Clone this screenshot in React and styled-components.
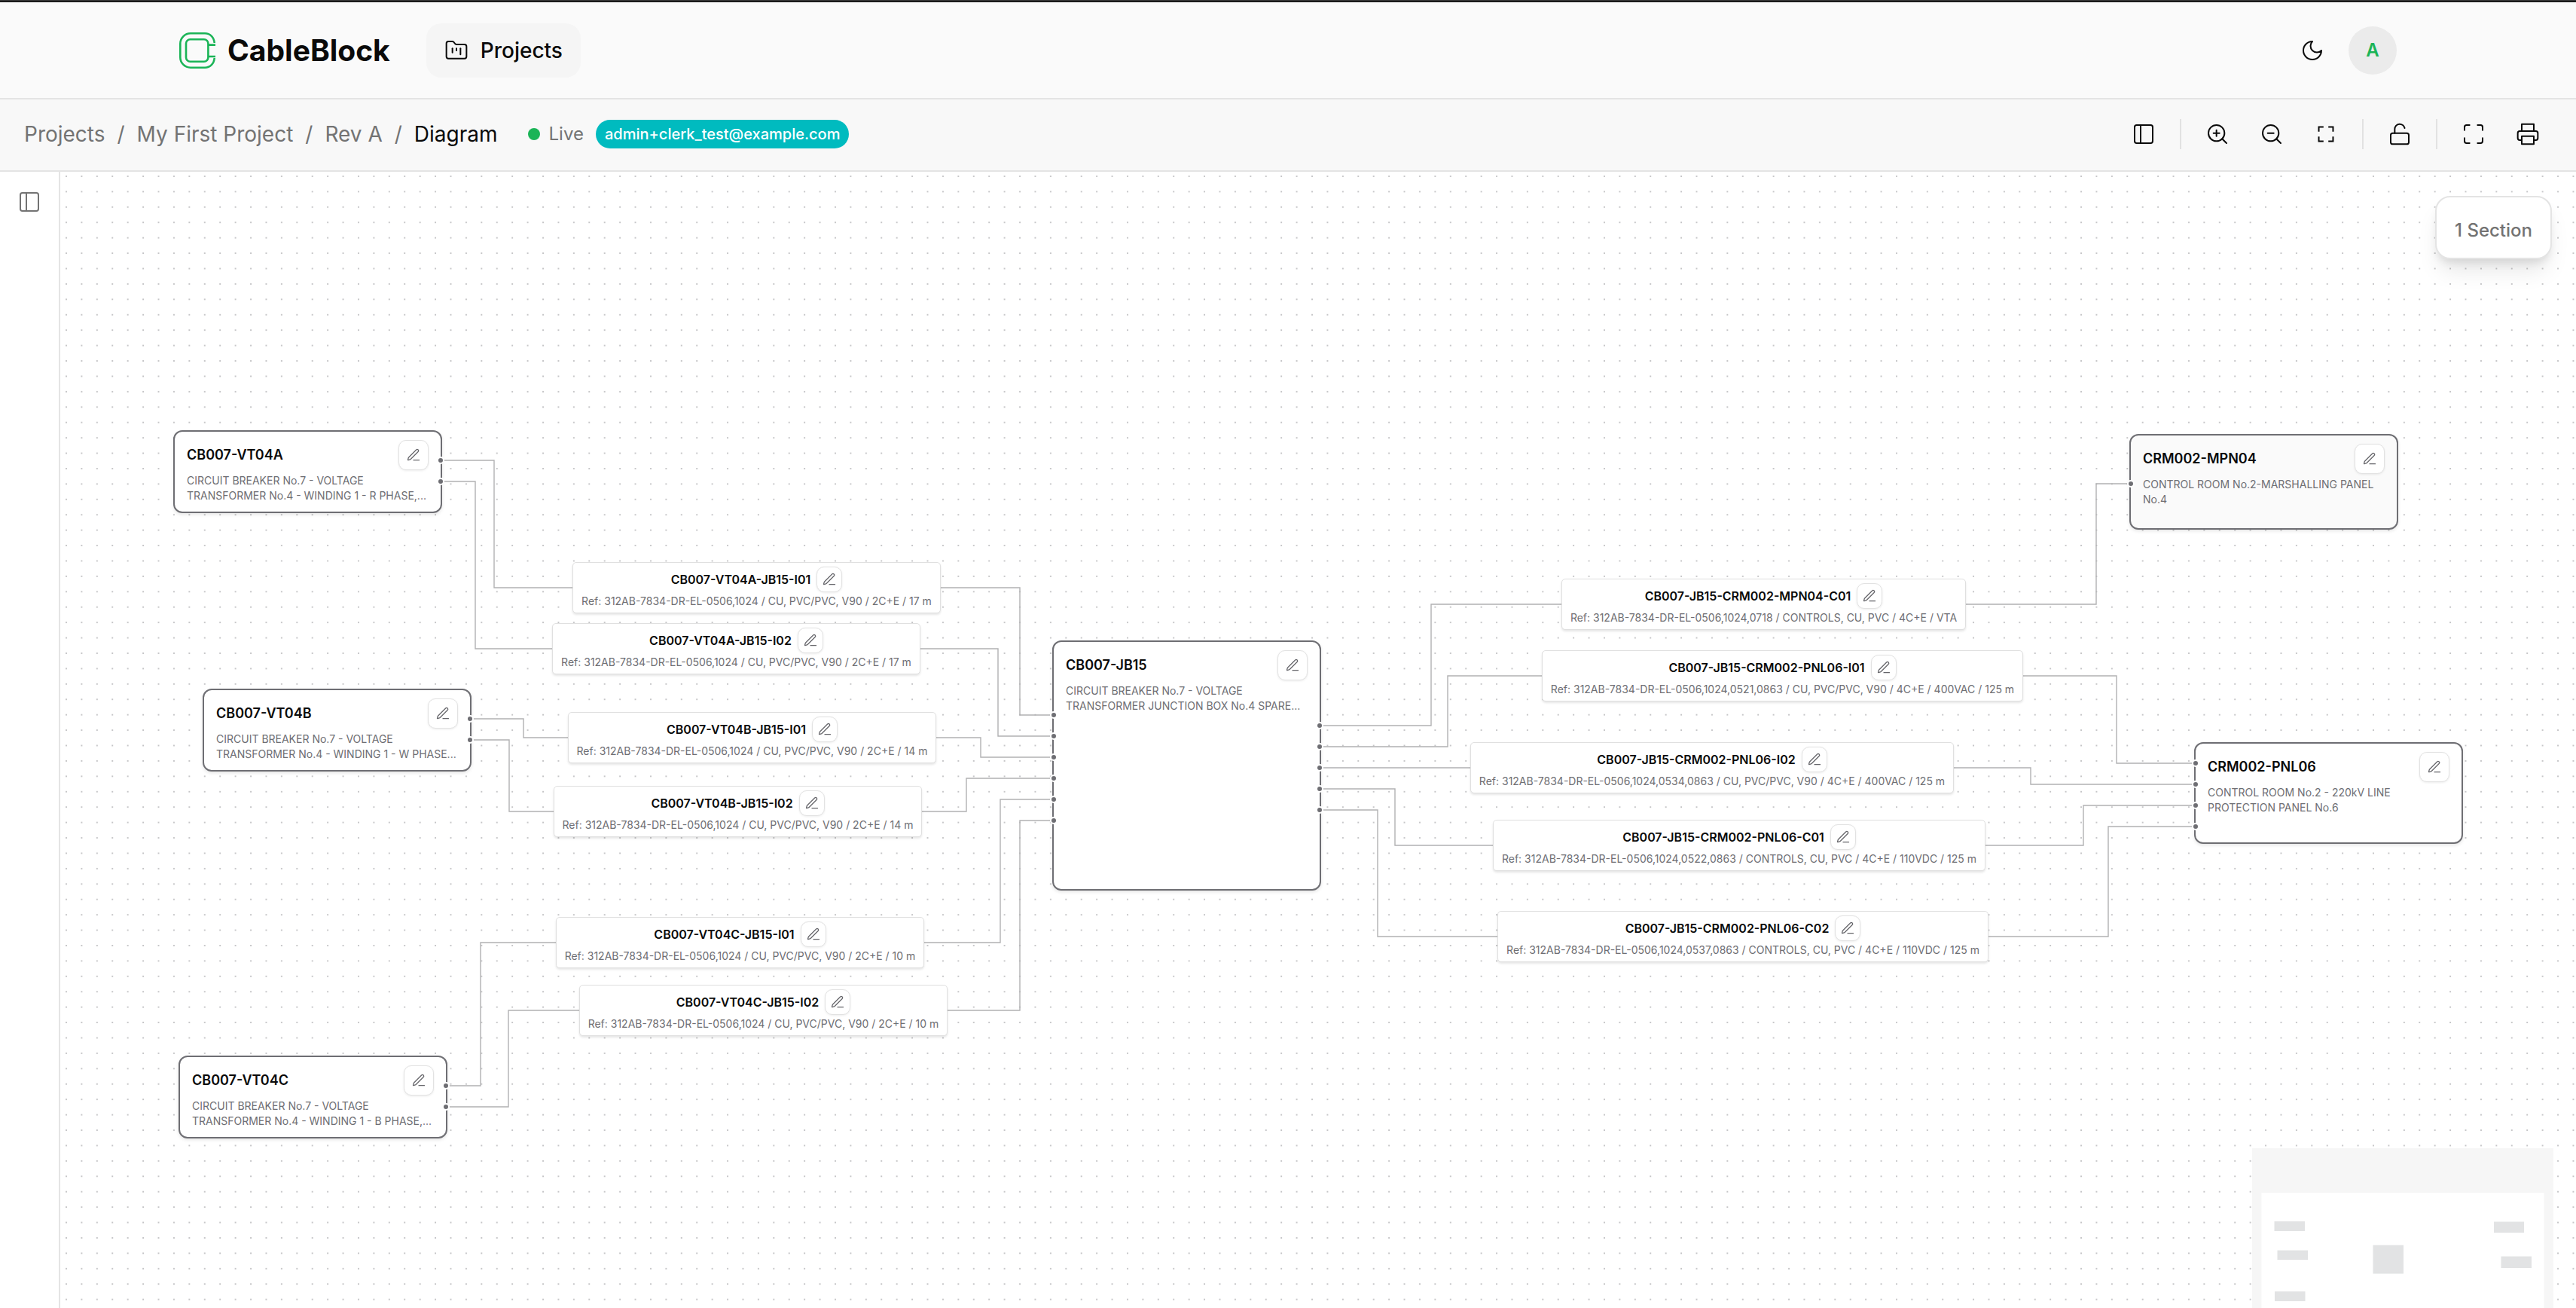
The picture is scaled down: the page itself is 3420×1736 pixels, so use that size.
import React from 'react';
import styled, { createGlobalStyle } from 'styled-components';
import { FolderKanban, LockOpen, Maximize, PanelLeft, ZoomIn, ZoomOut } from 'lucide-react';

const nodes = [
    { id: 'CB007-VT04A', x: 150, y: 343, h: 110, text: 'CIRCUIT BREAKER No.7 - VOLTAGE\nTRANSFORMER No.4 - WINDING 1 - R PHASE,...', right: [40, 68] },
    { id: 'CB007-VT04B', x: 189, y: 686, h: 110, text: 'CIRCUIT BREAKER No.7 - VOLTAGE\nTRANSFORMER No.4 - WINDING 1 - W PHASE...', right: [40, 68] },
    { id: 'CB007-VT04C', x: 157, y: 1173, h: 110, text: 'CIRCUIT BREAKER No.7 - VOLTAGE\nTRANSFORMER No.4 - WINDING 1 - B PHASE,...', right: [40, 68] },
    { id: 'CB007-JB15', x: 1317, y: 622, h: 332, text: 'CIRCUIT BREAKER No.7 - VOLTAGE\nTRANSFORMER JUNCTION BOX No.4 SPARE...', left: [99, 127, 155, 183, 211, 239], right: [113, 141, 169, 197, 225] },
    { id: 'CRM002-MPN04', x: 2747, y: 348, h: 127, text: 'CONTROL ROOM No.2-MARSHALLING PANEL\nNo.4', left: [66], shaded: true },
    { id: 'CRM002-PNL06', x: 2833, y: 757, h: 135, text: 'CONTROL ROOM No.2 - 220kV LINE\nPROTECTION PANEL No.6', left: [28, 56, 84, 112] },
];

const cables = [
    { id: 'CB007-VT04A-JB15-I01', x: 680, y: 518, w: 489, text: 'Ref: 312AB-7834-DR-EL-0506,1024 / CU, PVC/PVC, V90 / 2C+E / 17 m', path: 'M505 383H576V552H1274V721H1319' },
    { id: 'CB007-VT04A-JB15-I02', x: 653, y: 599, w: 489, text: 'Ref: 312AB-7834-DR-EL-0506,1024 / CU, PVC/PVC, V90 / 2C+E / 17 m', path: 'M505 411H551V633H1245V749H1319' },
    { id: 'CB007-VT04B-JB15-I01', x: 674, y: 717, w: 489, text: 'Ref: 312AB-7834-DR-EL-0506,1024 / CU, PVC/PVC, V90 / 2C+E / 14 m', path: 'M544 726H615V751H1222V777H1319' },
    { id: 'CB007-VT04B-JB15-I02', x: 655, y: 815, w: 489, text: 'Ref: 312AB-7834-DR-EL-0506,1024 / CU, PVC/PVC, V90 / 2C+E / 14 m', path: 'M544 754H596V849H1203V805H1319' },
    { id: 'CB007-VT04C-JB15-I01', x: 658, y: 989, w: 489, text: 'Ref: 312AB-7834-DR-EL-0506,1024 / CU, PVC/PVC, V90 / 2C+E / 10 m', path: 'M512 1213H558V1023H1248V833H1319' },
    { id: 'CB007-VT04C-JB15-I02', x: 689, y: 1079, w: 489, text: 'Ref: 312AB-7834-DR-EL-0506,1024 / CU, PVC/PVC, V90 / 2C+E / 10 m', path: 'M512 1241H595V1113H1274V861H1319' },
    { id: 'CB007-JB15-CRM002-MPN04-C01', x: 1993, y: 540, w: 537, text: 'Ref: 312AB-7834-DR-EL-0506,1024,0718 / CONTROLS, CU, PVC / 4C+E / VTA', path: 'M1672 735H1820V574H2703V414H2749' },
    { id: 'CB007-JB15-CRM002-PNL06-I01', x: 1967, y: 635, w: 639, text: 'Ref: 312AB-7834-DR-EL-0506,1024,0521,0863 / CU, PVC/PVC, V90 / 4C+E / 400VAC / 125 m', path: 'M1672 763H1842V669H2730V785H2835' },
    { id: 'CB007-JB15-CRM002-PNL06-I02', x: 1872, y: 757, w: 642, text: 'Ref: 312AB-7834-DR-EL-0506,1024,0534,0863 / CU, PVC/PVC, V90 / 4C+E / 400VAC / 125 m', path: 'M1672 791H2616V813H2835' },
    { id: 'CB007-JB15-CRM002-PNL06-C01', x: 1902, y: 860, w: 654, text: 'Ref: 312AB-7834-DR-EL-0506,1024,0522,0863 / CONTROLS, CU, PVC / 4C+E / 110VDC / 125 m', path: 'M1672 819H1772V894H2686V841H2835' },
    { id: 'CB007-JB15-CRM002-PNL06-C02', x: 1908, y: 981, w: 652, text: 'Ref: 312AB-7834-DR-EL-0506,1024,0537,0863 / CONTROLS, CU, PVC / 4C+E / 110VDC / 125 m', path: 'M1672 847H1749V1015H2719V869H2835' },
];

const PenIcon = ({ size }) => (
    <svg width={size} height={size} viewBox="0 0 24 24" fill="none" stroke="currentColor" strokeWidth="1.5" strokeLinecap="round" strokeLinejoin="round">
        <path d="M12 20h9" />
        <path d="M16.376 3.622a1 1 0 0 1 3.002 3.002L7.368 18.635a2 2 0 0 1-.855.506l-2.872.838a.5.5 0 0 1-.62-.62l.838-2.872a2 2 0 0 1 .506-.854z" />
    </svg>
);

const LineIcon = ({ children }) => (
    <svg width="32" height="32" viewBox="0 0 24 24" fill="none" stroke="currentColor" strokeWidth="1.5" strokeLinecap="round" strokeLinejoin="round">
        {children}
    </svg>
);

const Logo = () => (
    <svg width="48" height="48" viewBox="0 0 48 48" fill="none" stroke="#1bb457" strokeWidth="2.6">
        <path d="M46.7 14C46.2 6.5 41 1.3 34 1.3H15C7.4 1.3 1.3 7.4 1.3 15V33C1.3 40.6 7.4 46.7 15 46.7H34C41 46.7 46.2 41.5 46.7 34" />
        <rect x="9" y="9.2" width="29.4" height="29.6" rx="5.5" />
        <path d="M38.4 16.6H48M38.4 32H48" />
    </svg>
);

const Node = ({ node }) => (
    <NodeCard $x={node.x} $y={node.y} $h={node.h} $shaded={node.shaded}>
        <NodeHead>
            <NodeTitle>{node.id}</NodeTitle>
            <EditButton $size={40} aria-label={`Edit ${node.id}`}><PenIcon size={20} /></EditButton>
        </NodeHead>
        <NodeText>{node.text}</NodeText>
        {(node.left || []).map((y) => <Handle key={`l${y}`} $side="left" $y={y} />)}
        {(node.right || []).map((y) => <Handle key={`r${y}`} $side="right" $y={y} />)}
    </NodeCard>
);

const Cable = ({ cable }) => (
    <CableCard $x={cable.x} $y={cable.y} $w={cable.w}>
        <CableHead>
            <CableTitle>{cable.id}</CableTitle>
            <EditButton $size={34} aria-label={`Edit ${cable.id}`}><PenIcon size={20} /></EditButton>
        </CableHead>
        <CableText>{cable.text}</CableText>
    </CableCard>
);

const App = () => {
    return (
        <Page>
            <GlobalStyle />
            <Strip />
            <Header>
                <HeaderInner>
                    <Brand href="#">
                        <Logo />
                        CableBlock
                    </Brand>
                    <NavLink href="#projects">
                        <FolderKanban size={32} strokeWidth={1.5} />
                        Projects
                    </NavLink>
                    <Spacer />
                    <IconButton aria-label="Dark mode">
                        <LineIcon><path d="M12 3a6 6 0 0 0 9 9 9 9 0 1 1-9-9Z" /></LineIcon>
                    </IconButton>
                    <Avatar aria-label="Account">A</Avatar>
                </HeaderInner>
            </Header>
            <Toolbar>
                <Crumbs>
                    <a href="#projects">Projects</a>
                    <span>/</span>
                    <a href="#project">My First Project</a>
                    <span>/</span>
                    <a href="#rev">Rev A</a>
                    <span>/</span>
                    <Current>Diagram</Current>
                </Crumbs>
                <Live><Dot />Live</Live>
                <UserBadge>admin+clerk_test@example.com</UserBadge>
                <Spacer />
                <Tools>
                    <IconButton aria-label="Toggle panel"><PanelLeft size={32} strokeWidth={1.5} /></IconButton>
                    <Divider />
                    <IconButton aria-label="Zoom in"><ZoomIn size={32} strokeWidth={1.5} /></IconButton>
                    <IconButton aria-label="Zoom out"><ZoomOut size={32} strokeWidth={1.5} /></IconButton>
                    <IconButton aria-label="Fit view">
                        <svg width="32" height="32" viewBox="0 0 24 24" fill="none" stroke="currentColor" strokeWidth="1.5">
                            <path d="M4.9 9.6V4.9h4.7M14.4 4.9h4.7v4.7M19.1 14.4v4.7h-4.7M9.6 19.1H4.9v-4.7" />
                        </svg>
                    </IconButton>
                    <Divider />
                    <IconButton aria-label="Unlock"><LockOpen size={32} strokeWidth={1.5} /></IconButton>
                    <Divider />
                    <IconButton aria-label="Full screen"><Maximize size={32} strokeWidth={1.5} /></IconButton>
                    <IconButton aria-label="Print">
                        <LineIcon>
                            <path d="M6 9V2h12v7" />
                            <path d="M6 18H4a2 2 0 0 1-2-2v-5a2 2 0 0 1 2-2h16a2 2 0 0 1 2 2v5a2 2 0 0 1-2 2h-2" />
                            <path d="M6 14h12v8H6z" />
                        </LineIcon>
                    </IconButton>
                </Tools>
            </Toolbar>
            <Workspace>
                <Sidebar>
                    <IconButton $muted aria-label="Open sidebar"><PanelLeft size={32} strokeWidth={1.5} /></IconButton>
                </Sidebar>
                <Canvas>
                    <Wires>
                        <defs>
                            <pattern id="dots" x="7" y="5" width="20.42" height="20.42" patternUnits="userSpaceOnUse">
                                <circle cx="1" cy="1" r="0.8" fill="#7c7c82" />
                            </pattern>
                        </defs>
                        <rect width="100%" height="100%" fill="url(#dots)" />
                        {cables.map((cable) => (
                            <path key={cable.id} d={cable.path} fill="none" stroke="#b1b1b3" strokeWidth="1.4" />
                        ))}
                    </Wires>
                    {nodes.map((node) => <Node key={node.id} node={node} />)}
                    {cables.map((cable) => <Cable key={cable.id} cable={cable} />)}
                    <SectionCount>1 Section</SectionCount>
                    <MiniMap width="400" height="212" viewBox="0 0 400 212">
                        <rect width="400" height="212" fill="#f6f6f6" />
                        <rect x="12.5" y="59" width="375" height="160" fill="#fff" />
                        <g fill="#e2e3e4">
                            <rect x="29.5" y="97" width="40.5" height="13" />
                            <rect x="33.5" y="135.5" width="40.5" height="12.5" />
                            <rect x="30" y="190" width="40.5" height="13" />
                            <rect x="160.5" y="128.5" width="40.5" height="38" />
                            <rect x="321" y="97.5" width="40" height="14.5" />
                            <rect x="330.5" y="143.5" width="40.5" height="15.5" />
                        </g>
                    </MiniMap>
                </Canvas>
            </Workspace>
        </Page>
    )
}

const GlobalStyle = createGlobalStyle`
* {
    box-sizing:border-box;
}
body {
    margin:0;
    font-family:Inter, sans-serif;
    color:#0a0a0a;
    background:#fff;
}
button {
    font-family:inherit;
    padding:0;
}
a {
    color:inherit;
    text-decoration:none;
}
`;

const Page = styled.div`
display:flex;
flex-direction:column;
height:100vh;
`;

const Strip = styled.div`
height:3px;
flex:none;
background:#343434;
border-bottom:1px solid #000;
`;

const Header = styled.header`
height:129px;
flex:none;
background:#fafafa;
border-bottom:2px solid #e4e4e4;
`;

const HeaderInner = styled.div`
height:100%;
max-width:3072px;
margin:0 auto;
padding:0 64px;
display:flex;
align-items:center;
`;

const Brand = styled.a`
display:flex;
align-items:center;
gap:16px;
margin-right:48px;
font-size:39px;
font-weight:700;
line-height:48px;
`;

const NavLink = styled.a`
display:flex;
align-items:center;
gap:16px;
height:72px;
padding:0 24px;
border-radius:20px;
background:#f5f5f5;
font-size:28px;
font-weight:500;
`;

const Spacer = styled.div`
flex:1;
`;

const IconButton = styled.button`
width:64px;
height:64px;
display:flex;
align-items:center;
justify-content:center;
border:none;
background:none;
color:${(props) => (props.$muted ? '#737373' : '#0a0a0a')};
`;

const Avatar = styled.button`
width:64px;
height:64px;
margin-left:16px;
border:none;
border-radius:50%;
background:#ebebeb;
color:#1bb457;
font-size:24px;
font-weight:600;
`;

const Toolbar = styled.div`
height:96px;
flex:none;
display:flex;
align-items:center;
padding:0 32px 2px;
background:#f8f8f8;
border-bottom:2px solid #e4e4e4;
`;

const Crumbs = styled.nav`
display:flex;
gap:16px;
color:#737373;
font-size:28px;
line-height:40px;
`;

const Current = styled.span`
color:#0a0a0a;
`;

const Live = styled.div`
display:flex;
align-items:center;
gap:12px;
margin:0 16px 0 40px;
color:#737373;
font-size:24px;
line-height:32px;
`;

const Dot = styled.span`
width:16px;
height:16px;
border-radius:50%;
background:#1bb457;
`;

const UserBadge = styled.span`
padding:0 12px;
border-radius:20px;
background:#00bbbf;
color:#fff;
font-size:20px;
font-weight:500;
line-height:38px;
`;

const Tools = styled.div`
display:flex;
align-items:center;
gap:8px;
`;

const Divider = styled.div`
width:2px;
height:40px;
margin:0 8px;
background:#e2e2e2;
`;

const Workspace = styled.main`
flex:1;
min-height:0;
display:flex;
`;

const Sidebar = styled.aside`
width:80px;
flex:none;
display:flex;
justify-content:center;
align-items:flex-start;
padding-top:8px;
border-right:2px solid #e4e4e4;
`;

const Canvas = styled.div`
position:relative;
flex:1;
overflow:hidden;
background:#fff;
`;

const Wires = styled.svg`
position:absolute;
top:0;
left:0;
width:100%;
height:100%;
`;

const NodeCard = styled.div`
position:absolute;
left:${(props) => props.$x}px;
top:${(props) => props.$y}px;
width:357px;
height:${(props) => props.$h}px;
padding:11px 16px;
border:2px solid #6e6e73;
border-radius:12px;
background:${(props) => (props.$shaded ? '#fafafa' : '#fff')};
box-shadow:0 2px 4px rgba(0,0,0,0.1);
`;

const NodeHead = styled.div`
display:flex;
align-items:center;
justify-content:space-between;
`;

const NodeTitle = styled.div`
font-size:18px;
font-weight:600;
line-height:24px;
`;

const NodeText = styled.div`
margin-top:4px;
color:#6e6e73;
font-size:14px;
line-height:20px;
white-space:pre;
`;

const EditButton = styled.button`
width:${(props) => props.$size}px;
height:${(props) => props.$size}px;
flex:none;
display:flex;
align-items:center;
justify-content:center;
border:1px solid #e2e2e2;
border-radius:10px;
background:#fff;
color:#65656a;
box-shadow:0 1px 3px rgba(0,0,0,0.08);
`;

// the connection point: a grey dot that cuts a white gap in the card border
const Handle = styled.span`
position:absolute;
top:${(props) => props.$y - 7}px;
${(props) => props.$side}:-5px;
width:10px;
height:10px;
border:2px solid #fff;
border-radius:50%;
background:#6e6e73;
`;

const CableCard = styled.div`
position:absolute;
left:${(props) => props.$x}px;
top:${(props) => props.$y}px;
width:${(props) => props.$w}px;
height:68px;
padding:5px 0;
border:1px solid #e0e0e0;
border-radius:5px;
background:#fff;
box-shadow:0 2px 3px rgba(0,0,0,0.1);
`;

const CableHead = styled.div`
display:flex;
align-items:center;
justify-content:center;
gap:8px;
`;

const CableTitle = styled.div`
font-size:16px;
font-weight:600;
line-height:24px;
`;

const CableText = styled.div`
color:#6e6e73;
font-size:14px;
line-height:24px;
text-align:center;
white-space:nowrap;
`;

const SectionCount = styled.div`
position:absolute;
top:32px;
right:32px;
padding:28px 24px 20px;
border:2px solid #e4e4e4;
border-radius:20px;
background:#fff;
color:#737373;
font-size:24px;
font-weight:500;
line-height:32px;
box-shadow:0 20px 30px -6px rgba(0,0,0,0.1), 0 8px 12px -4px rgba(0,0,0,0.1);
`;

const MiniMap = styled.svg`
position:absolute;
right:30px;
bottom:0;
`;

export default App;
